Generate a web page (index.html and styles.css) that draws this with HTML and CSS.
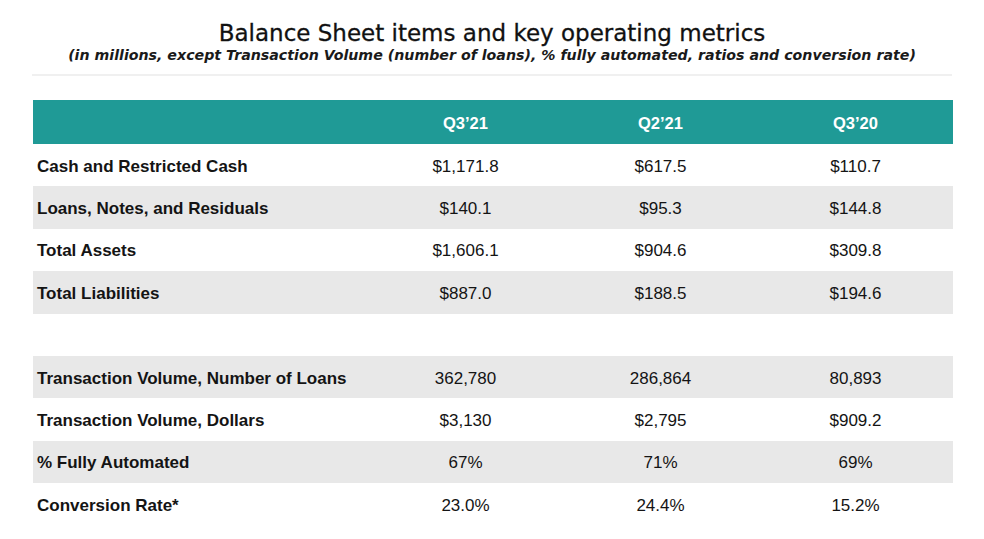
FILE: index.html
```html
<!DOCTYPE html>
<html>
<head>
<meta charset="utf-8">
<link rel="stylesheet" href="styles.css">
</head>
<body>
<div class="page">
  <header class="heading">
    <h1 class="title">Balance Sheet items and key operating metrics</h1>
    <p class="subtitle">(in millions, except Transaction Volume (number of loans), % fully automated, ratios and conversion rate)</p>
  </header>
  <table class="metrics">
    <colgroup>
      <col class="c-label"><col class="c-val"><col class="c-val"><col class="c-val">
    </colgroup>
    <thead>
      <tr><th></th><th>Q3’21</th><th>Q2’21</th><th>Q3’20</th></tr>
    </thead>
    <tbody>
      <tr><td>Cash and Restricted Cash</td><td>$1,171.8</td><td>$617.5</td><td>$110.7</td></tr>
      <tr class="alt"><td>Loans, Notes, and Residuals</td><td>$140.1</td><td>$95.3</td><td>$144.8</td></tr>
      <tr><td>Total Assets</td><td>$1,606.1</td><td>$904.6</td><td>$309.8</td></tr>
      <tr class="alt"><td>Total Liabilities</td><td>$887.0</td><td>$188.5</td><td>$194.6</td></tr>
      <tr class="spacer"><td></td><td></td><td></td><td></td></tr>
      <tr class="alt"><td>Transaction Volume, Number of Loans</td><td>362,780</td><td>286,864</td><td>80,893</td></tr>
      <tr><td>Transaction Volume, Dollars</td><td>$3,130</td><td>$2,795</td><td>$909.2</td></tr>
      <tr class="alt"><td>% Fully Automated</td><td>67%</td><td>71%</td><td>69%</td></tr>
      <tr><td>Conversion Rate*</td><td>23.0%</td><td>24.4%</td><td>15.2%</td></tr>
    </tbody>
  </table>
</div>
</body>
</html>
```
FILE: styles.css
```css
* { box-sizing: border-box; }
html, body { margin: 0; padding: 0; background: #ffffff; }
.page {
  width: 984px;
  height: 539px;
  padding-top: 20px;
  overflow: hidden;
}
.heading {
  margin: 0 32px;
  border-bottom: 2px solid #f0f0f0;
  padding-bottom: 10px;
  text-align: center;
}
.title {
  margin: 0;
  font-family: "DejaVu Sans", sans-serif;
  font-weight: 500;
  font-size: 23px;
  line-height: 26px;
  color: #111111;
  -webkit-text-stroke: 0.3px #111111;
}
.subtitle {
  margin: 0;
  font-family: "DejaVu Sans", sans-serif;
  font-style: italic;
  font-weight: 600;
  font-size: 14.2px;
  line-height: 18px;
  color: #1a1a1a;
}
.metrics {
  margin: 24px 0 0 33px;
  width: 920px;
  table-layout: fixed;
  border-collapse: collapse;
  font-family: "Liberation Sans", Arial, sans-serif;
  font-size: 17px;
  color: #141414;
}
.c-label { width: 335px; }
.c-val { width: 195px; }
.metrics th {
  background: #1f9a96;
  color: #ffffff;
  font-weight: bold;
  font-size: 16.5px;
  height: 44px;
  text-align: center;
  padding: 3px 0 0;
}
.metrics td {
  height: 42.4px;
  padding: 3px 0 0;
  text-align: center;
}
.metrics td:first-child {
  text-align: left;
  padding-left: 4px;
  font-weight: bold;
}
.metrics tr.alt td { background: #e8e8e8; }
```
